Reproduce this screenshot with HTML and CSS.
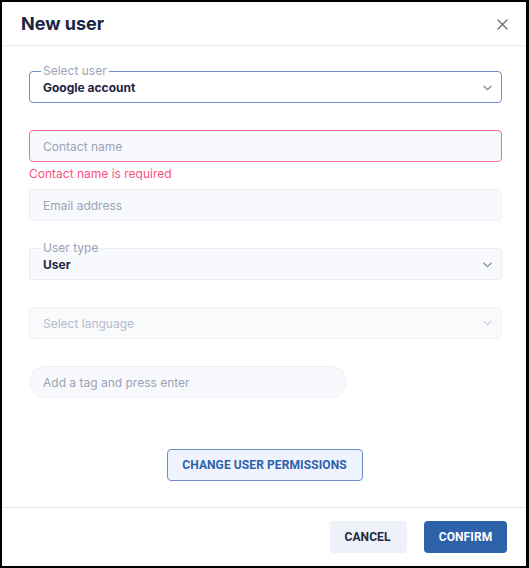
FILE: index.html
```html
<!DOCTYPE html>
<html>
<head>
<meta charset="utf-8">
<link rel="stylesheet" href="styles.css">
</head>
<body>
<div class="dialog">
  <header class="dialog-header">
    <h1 class="title">New user</h1>
    <button class="close" aria-label="Close">
      <svg width="11" height="11" viewBox="0 0 11 11"><path d="M1 1L10 10M10 1L1 10" stroke="#6b6f7a" stroke-width="1.4" stroke-linecap="round"/></svg>
    </button>
  </header>
  <main class="dialog-body">
    <div class="field">
      <fieldset class="box box-outlined box-active">
        <legend class="legend">Select user</legend>
        <div class="box-row">
          <span class="value">Google account</span>
          <svg class="chev" width="9" height="6" viewBox="0 0 9 6"><path d="M1 1.2L4.5 4.6L8 1.2" fill="none" stroke="#7b8499" stroke-width="1.2" stroke-linecap="round" stroke-linejoin="round"/></svg>
        </div>
      </fieldset>
    </div>
    <div class="field">
      <div class="box box-input box-error"><span class="placeholder">Contact name</span></div>
      <div class="error-text">Contact name is required</div>
    </div>
    <div class="field">
      <div class="box box-input"><span class="placeholder">Email address</span></div>
    </div>
    <div class="field">
      <fieldset class="box box-outlined box-filled">
        <legend class="legend">User type</legend>
        <div class="box-row">
          <span class="value">User</span>
          <svg class="chev" width="9" height="6" viewBox="0 0 9 6"><path d="M1 1.2L4.5 4.6L8 1.2" fill="none" stroke="#7b8499" stroke-width="1.2" stroke-linecap="round" stroke-linejoin="round"/></svg>
        </div>
      </fieldset>
    </div>
    <div class="field">
      <div class="box box-input box-disabled">
        <span class="placeholder placeholder-light">Select language</span>
        <svg class="chev" width="9" height="6" viewBox="0 0 9 6"><path d="M1 1.2L4.5 4.6L8 1.2" fill="none" stroke="#c9ced9" stroke-width="1.2" stroke-linecap="round" stroke-linejoin="round"/></svg>
      </div>
    </div>
    <div class="field">
      <div class="box box-input box-tag"><span class="placeholder">Add a tag and press enter</span></div>
    </div>
    <div class="perm-row">
      <button class="btn btn-outline">CHANGE USER PERMISSIONS</button>
    </div>
  </main>
  <footer class="dialog-footer">
    <button class="btn btn-cancel">CANCEL</button>
    <button class="btn btn-primary">CONFIRM</button>
  </footer>
</div>
</body>
</html>
```
FILE: styles.css
```css
* { box-sizing: border-box; }
html, body { margin: 0; padding: 0; background: #fff; }
body { font-family: Inter, "Noto Sans", sans-serif; }

.dialog {
  width: 529px;
  height: 568px;
  border: 2px solid #000;
  border-right-width: 3px;
  background: #fff;
  display: flex;
  flex-direction: column;
}

.dialog-header {
  height: 44px;
  border-bottom: 1px solid #e7e9ee;
  display: flex;
  align-items: center;
  justify-content: space-between;
  padding: 0 18px 0 19px;
}
.title {
  margin: 0 0 1px 0;
  font-size: 18px;
  font-weight: 700;
  color: #1d2443;
}
.close {
  border: 0;
  background: none;
  padding: 0;
  width: 12px;
  height: 12px;
  display: flex;
  align-items: center;
  justify-content: center;
  margin-top: 1px;
}

.dialog-body {
  flex: 1;
  padding: 25px 24px 0 27px;
  display: flex;
  flex-direction: column;
}

.field {
  height: 59px;
  display: flex;
  flex-direction: column;
}

.box {
  height: 32px;
  border-radius: 4px;
  font-size: 12px;
  margin: 0;
  min-width: 0;
}
.box-input {
  background: #f8f9fc;
  border: 1px solid #edf0f6;
  display: flex;
  align-items: center;
  justify-content: space-between;
  padding: 0 9px 0 13px;
}
.box-error { border-color: #ff6b90; }
.box-disabled { background: #f9fafc; border-color: #f1f3f7; }
.box-tag {
  width: 318px;
  border-radius: 16px;
  height: 32px;
}

.placeholder { color: #9ba3b7; }
.placeholder-light { color: #b4bac8; }

.box-outlined {
  height: 39px;
  margin-top: -7px;
  padding: 0 9px 0 13px;
  border: 1px solid #6e8fc6;
  border-radius: 4px;
}
.box-filled {
  background: #f8f9fc;
  border-color: #e7ebf3;
}
.legend {
  font-size: 12px;
  line-height: 14px;
  color: #9ba3b7;
  padding: 0 2px;
  margin-left: -2px;
}
.box-row {
  display: flex;
  align-items: center;
  justify-content: space-between;
  height: 17px;
  margin-top: 1px;
}
.value {
  font-weight: 700;
  color: #1d2443;
  font-size: 12px;
}
.chev { display: block; }

.error-text {
  color: #fd5080;
  font-size: 12px;
  margin-top: 4px;
}

.perm-row {
  display: flex;
  justify-content: center;
  margin-top: 24px;
}

.btn {
  font-family: Roboto, "Liberation Sans", sans-serif;
  font-weight: 700;
  font-size: 12px;
  height: 32px;
  border-radius: 4px;
  cursor: pointer;
  letter-spacing: 0.1px;
}
.btn-outline {
  width: 196px;
  background: #eef3fd;
  border: 1px solid #6e8fc6;
  color: #2f62aa;
  margin-right: 2px;
}

.dialog-footer {
  border-top: 1px solid #e7e9ee;
  height: 59px;
  display: flex;
  align-items: center;
  justify-content: flex-end;
  gap: 17px;
  padding: 0 19px 1px 0;
}
.btn-cancel {
  width: 77px;
  background: #eef1f8;
  border: 0;
  color: #232940;
  padding-right: 8px;
}
.btn-primary {
  width: 83px;
  background: #2d62a9;
  border: 0;
  color: #fff;
}
```
